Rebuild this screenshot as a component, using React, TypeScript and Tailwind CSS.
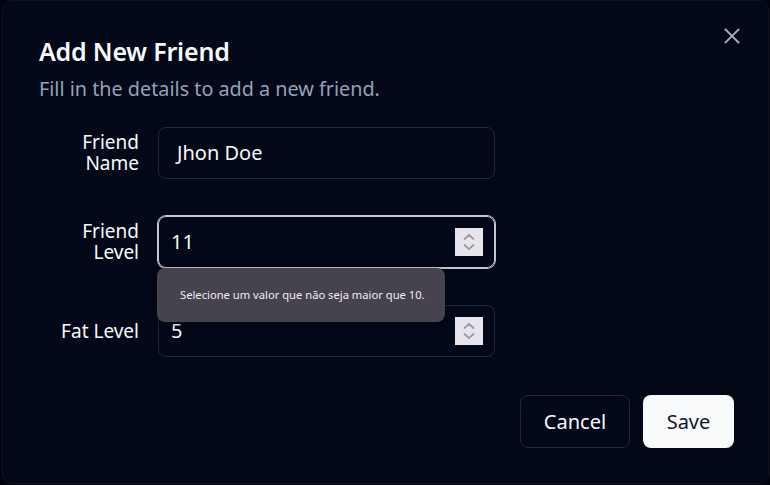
import React from "react";

const font = { fontFamily: '"Noto Sans", "Open Sans", sans-serif' };

function Spinner() {
  return (
    <div className="absolute right-[11px] top-1/2 -translate-y-1/2 w-[28px] h-[28px] bg-[#e7e5eb] flex items-center justify-center">
      <svg width="14" height="20" viewBox="0 0 14 20" fill="none" stroke="#9c98a4" strokeWidth="1.8" strokeLinecap="round" strokeLinejoin="round">
        <path d="M2.5 7 L7 2.8 L11.5 7" />
        <path d="M2.5 13 L7 17.2 L11.5 13" />
      </svg>
    </div>
  );
}

function Row({ label, value, spinner, focused }: { label: React.ReactNode; value: string; spinner?: boolean; focused?: boolean }) {
  return (
    <div className="flex items-center gap-[19px] h-[52px]">
      <label className="w-[100px] text-right text-[19px] leading-[21px] text-[#f8fafc]">{label}</label>
      <div
        className={
          "relative w-[337px] h-[52px] rounded-[8px] border flex items-center text-[20px] text-[#f8fafc] " +
          (spinner ? "pl-[12px] " : "pl-[18px] ") +
          (focused ? "border-[#c3c7cf] shadow-[0_0_0_1px_#c3c7cf]" : "border-[#1e293b]")
        }
      >
        <span>{value}</span>
        {spinner && <Spinner />}
      </div>
    </div>
  );
}

export default function App() {
  return (
    <div className="w-[770px] h-[485px] bg-[#01040c] relative overflow-hidden" style={font}>
      <div className="ml-[2px] w-[767px] h-[484px] rounded-[10px] border border-[#0e1422] bg-[#020817] relative pl-[36px] pt-[35px]">
        <button className="absolute right-[26px] top-[25px] w-[20px] h-[20px] flex items-center justify-center">
          <svg width="16" height="16" viewBox="0 0 16 16" fill="none" stroke="#a9acb5" strokeWidth="1.9" strokeLinecap="square">
            <path d="M1.5 1.5 L14.5 14.5 M14.5 1.5 L1.5 14.5" />
          </svg>
        </button>
        <h2 className="text-[25px] leading-[30px] font-semibold text-[#f8fafc] tracking-[-0.2px]">Add New Friend</h2>
        <p className="mt-[11px] text-[19.8px] leading-[24px] text-[#94a3b8]">Fill in the details to add a new friend.</p>
        <div className="mt-[26px] flex flex-col gap-[37px]">
          <Row label={<>Friend<br />Name</>} value="Jhon Doe" />
          <Row label={<>Friend<br />Level</>} value="11" spinner focused />
          <Row label="Fat Level" value="5" spinner />
        </div>
        <div className="mt-[38px] flex justify-end gap-[13px] pr-[34px]">
          <button className="w-[110px] h-[53px] rounded-[8px] border border-[#1e293b] text-[20px] text-[#f8fafc]">Cancel</button>
          <button className="w-[91px] h-[53px] rounded-[8px] bg-[#f8fafc] text-[20px] text-[#0f172a]">Save</button>
        </div>
      </div>
      <div className="absolute left-[157px] top-[268px] w-[288px] h-[54px] rounded-[8px] bg-[#46434e] flex items-center pl-[23px] text-[11.2px] text-[#eeedf1] shadow-[0_2px_6px_rgba(0,0,0,0.35)]">
        Selecione um valor que não seja maior que 10.
      </div>
    </div>
  );
}
